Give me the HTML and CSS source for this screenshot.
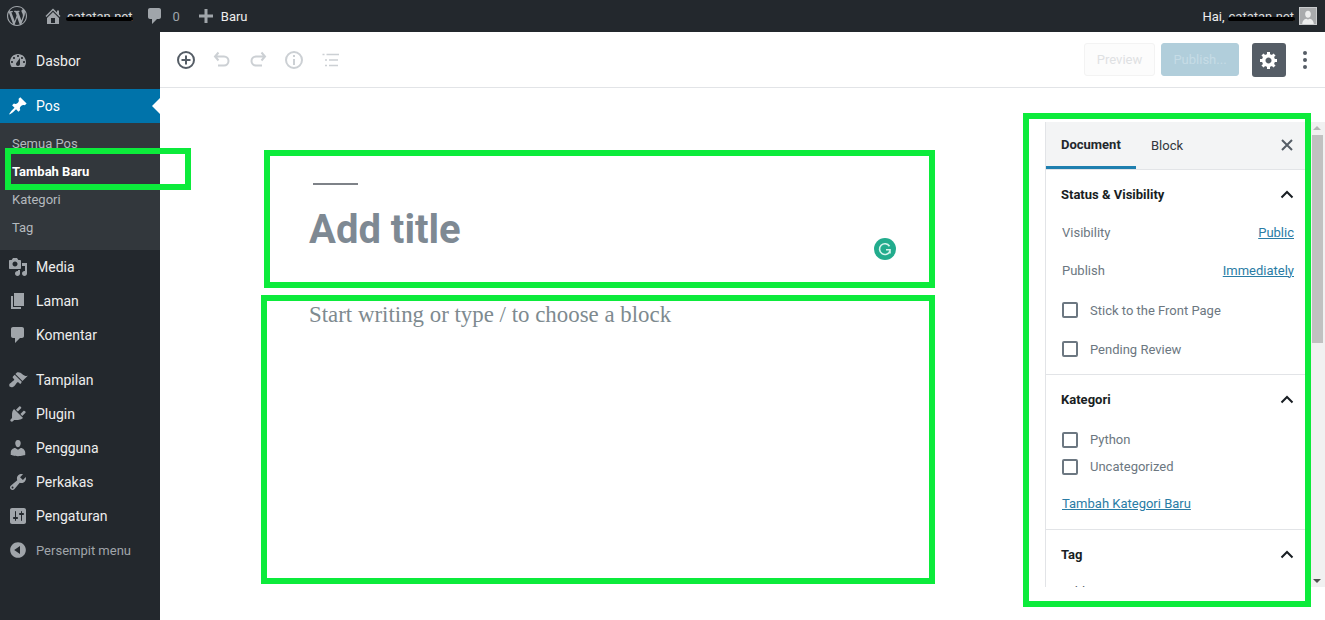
FILE: index.html
```html
<!DOCTYPE html>
<html lang="id">
<head>
<meta charset="utf-8">
<title>Add New Post</title>
<link rel="stylesheet" href="styles.css">
</head>
<body>
<div class="app">
  <header class="adminbar">
    <div class="bar-left">
      <svg class="bar-icon wp" viewBox="0 0 20 20"><path d="M20 10c0-5.51-4.49-10-10-10C4.48 0 0 4.49 0 10c0 5.52 4.48 10 10 10 5.51 0 10-4.48 10-10zM7.78 15.37L4.37 6.22c.55-.02 1.17-.08 1.17-.08.5-.06.44-1.13-.06-1.11 0 0-1.45.11-2.37.11-.18 0-.37 0-.58-.01C4.12 2.69 6.87 1.11 10 1.11c2.33 0 4.45.87 6.05 2.34-.68-.11-1.65.39-1.65 1.58 0 .74.45 1.36.9 2.1.35.61.55 1.36.55 2.46 0 1.49-1.4 5-1.4 5l-3.03-8.37c.54-.02.82-.17.82-.17.5-.05.44-1.25-.06-1.22 0 0-1.44.12-2.38.12-.87 0-2.33-.12-2.33-.12-.5-.03-.56 1.2-.06 1.22l.92.08 1.26 3.41zM17.41 10c.24-.64.74-1.87.43-4.25.7 1.29 1.05 2.71 1.05 4.25 0 3.29-1.73 6.24-4.4 7.78.97-2.59 1.94-5.2 2.92-7.78zM6.1 18.09C3.12 16.65 1.11 13.53 1.11 10c0-1.3.23-2.48.72-3.59C3.25 10.3 4.67 14.2 6.1 18.09zm4.03-6.63l2.58 6.98c-.86.29-1.76.45-2.71.45-.79 0-1.57-.11-2.29-.33.81-2.38 1.62-4.74 2.42-7.1z"/></svg>
      <svg class="bar-icon home" viewBox="0 0 20 20"><path d="M16 8.5l1.53 1.53-1.06 1.06L10 4.62l-6.47 6.47-1.06-1.06L10 2.5l4 4v-2h2v4zm-6-2.46l6 5.99V18H4v-5.97zM12 17v-5H8v5h4z"/></svg>
      <span class="scribbled site">catatan.net</span>
      <svg class="bar-icon comment" viewBox="0 0 20 20"><path d="M5 2h9c1.1 0 2 .9 2 2v7c0 1.1-.9 2-2 2h-2l-5 5v-5H5c-1.1 0-2-.9-2-2V4c0-1.1.9-2 2-2z"/></svg>
      <span class="count">0</span>
      <svg class="bar-icon plus" viewBox="0 0 20 20"><path d="M17 8.5v3h-5.5V17h-3v-5.5H3v-3h5.5V3h3v5.5z"/></svg>
      <span class="bar-text">Baru</span>
    </div>
    <div class="bar-right">
      <span class="bar-text">Hai,</span>
      <span class="scribbled user">catatan.net</span>
      <span class="avatar"><svg viewBox="0 0 18 18"><path d="M9 3c2 0 3.200 1.500 3.200 3.700S11 11 9 11 5.800 8.900 5.800 6.700 7 3 9 3zM2.500 18c0-3.500 2-5.500 4.500-6l2 1 2-1c2.500.5 4.500 2.500 4.500 6z"/></svg></span>
    </div>
  </header>

  <div class="main">
    <nav class="sidemenu">
      <a class="item first"><svg viewBox="0 0 20 20"><path fill-rule="evenodd" d="M3.760 16h12.480c1.100-1.370 1.760-3.110 1.760-5 0-4.420-3.580-8-8-8s-8 3.580-8 8c0 1.890.66 3.630 1.760 5zM10 4c.55 0 1 .45 1 1s-.45 1-1 1-1-.45-1-1 .45-1 1-1zM6 6c.55 0 1 .45 1 1s-.45 1-1 1-1-.45-1-1 .45-1 1-1zm8 0c.55 0 1 .45 1 1s-.45 1-1 1-1-.45-1-1 .45-1 1-1zm-5.370 5.550L12 7v6c0 1.100-.9 2-2 2s-2-.9-2-2c0-.57.24-1.080.63-1.450zM4 10c.55 0 1 .45 1 1s-.45 1-1 1-1-.45-1-1 .45-1 1-1zm12 0c.55 0 1 .45 1 1s-.45 1-1 1-1-.45-1-1 .45-1 1-1z"/></svg>Dasbor</a>
      <a class="item active"><svg viewBox="0 0 20 20"><path d="M10.440 3.020l1.820-1.820 6.360 6.350-1.830 1.820c-1.050-.68-2.480-.57-3.410.36l-.75.75c-.92.93-1.040 2.350-.35 3.410l-1.830 1.820-2.410-2.410-2.800 2.790c-.42.42-3.380 2.710-3.800 2.290s1.860-3.390 2.280-3.810l2.790-2.790L4.100 9.360l1.830-1.820c1.050.69 2.480.57 3.400-.36l.75-.75c.93-.92 1.050-2.350.36-3.410z"/></svg>Pos</a>
      <ul class="submenu">
        <li>Semua Pos</li>
        <li class="current">Tambah Baru</li>
        <li>Kategori</li>
        <li>Tag</li>
      </ul>
      <a class="item"><svg viewBox="0 0 20 20"><path fill-rule="evenodd" d="M13 11V4c0-.55-.45-1-1-1h-1.670L9 1H5L3.670 3H2c-.55 0-1 .45-1 1v7c0 .55.45 1 1 1h10c.55 0 1-.45 1-1zM7 4.500c1.380 0 2.500 1.120 2.500 2.500S8.380 9.500 7 9.500 4.500 8.380 4.500 7 5.620 4.500 7 4.500zM14 6h5v10.500c0 1.380-1.120 2.500-2.500 2.500S14 17.880 14 16.500s1.120-2.500 2.500-2.500c.17 0 .34.02.5.05V9h-3V6zm-4 8.050V13h2v3.500c0 1.380-1.120 2.500-2.500 2.500S7 17.880 7 16.500 8.120 14 9.500 14c.17 0 .34.02.5.05z"/></svg>Media</a>
      <a class="item"><svg viewBox="0 0 20 20"><path d="M6 15V2h10v13H6zm-1 1h8v2H3V5h2v11z"/></svg>Laman</a>
      <a class="item"><svg viewBox="0 0 20 20"><path d="M5 2h9c1.100 0 2 .9 2 2v7c0 1.100-.9 2-2 2h-2l-5 5v-5H5c-1.100 0-2-.9-2-2V4c0-1.100.9-2 2-2z"/></svg>Komentar</a>
      <a class="item spaced"><svg viewBox="0 0 20 20"><path d="M14.480 11.060L7.410 3.990l1.500-1.500c.5-.56 2.300-.47 3.510.32 1.210.8 1.430 1.280 2.910 2.100 1.180.64 2.450 1.260 4.450.85zm-.71.71L6.700 4.700 4.930 6.470c-.39.39-.39 1.020 0 1.410l1.060 1.060c.39.39.39 1.030 0 1.420-.6.6-1.430 1.110-2.210 1.690-.35.26-.7.53-1.010.84C1.430 13.230.76 14.520 1.600 16.400c.08.18.28.38.46.46 1.880.84 3.170.17 4.530-1.170.3-.31.58-.66.84-1.010.58-.78 1.090-1.610 1.690-2.210.39-.39 1.030-.39 1.420 0l1.060 1.060c.39.39 1.020.39 1.410 0z"/></svg>Tampilan</a>
      <a class="item"><svg viewBox="0 0 20 20"><path d="M13.110 4.360L9.870 7.600 8 5.730l3.240-3.240c.35-.34 1.050-.2 1.560.32.52.51.66 1.210.31 1.550zm-8 1.770l.91-1.120 9.010 9.010-1.190.84c-.71.71-2.630 1.160-3.820 1.160H6.140L4.900 17.260c-.59.59-1.540.59-2.120 0-.59-.58-.59-1.530 0-2.120l1.240-1.240v-3.880c0-1.130.4-3.190 1.090-3.890zm7.260 3.970l3.240-3.240c.34-.35 1.040-.21 1.550.31.52.51.66 1.210.31 1.550l-3.240 3.250z"/></svg>Plugin</a>
      <a class="item"><svg viewBox="0 0 20 20"><path d="M10 9.250c-2.270 0-2.730-3.440-2.730-3.440C7 4.020 7.820 2 9.970 2c2.160 0 2.980 2.020 2.710 3.810 0 0-.41 3.440-2.680 3.440zm0 2.570L12.720 10c2.390 0 4.520 2.330 4.520 4.530v2.490s-3.650 1.130-7.240 1.130c-3.650 0-7.240-1.130-7.240-1.130v-2.490c0-2.250 1.940-4.480 4.470-4.480z"/></svg>Pengguna</a>
      <a class="item"><svg viewBox="0 0 20 20"><path fill-rule="evenodd" d="M16.680 9.770c-1.340 1.340-3.300 1.670-4.950.99l-5.410 6.520c-.99.99-2.590.99-3.580 0s-.99-2.590 0-3.570l6.520-5.420c-.68-1.650-.35-3.610.99-4.950 1.280-1.280 3.120-1.620 4.720-1.060l-2.890 2.890 2.820 2.820 2.860-2.870c.53 1.580.18 3.390-1.080 4.650zM3.810 16.210c.4.39 1.040.39 1.430 0 .4-.4.4-1.040 0-1.430-.39-.4-1.030-.4-1.430 0-.39.39-.39 1.030 0 1.430z"/></svg>Perkakas</a>
      <a class="item"><svg viewBox="0 0 20 20"><path fill-rule="evenodd" d="M18 16V4c0-1.100-.9-2-2-2H4c-1.100 0-2 .9-2 2v12c0 1.100.9 2 2 2h12c1.100 0 2-.9 2-2zM8 11h1c.55 0 1 .45 1 1s-.45 1-1 1H8v1.500c0 .28-.22.5-.5.5s-.5-.22-.5-.5V13H6c-.55 0-1-.45-1-1s.45-1 1-1h1V5.500c0-.28.22-.5.5-.5s.5.22.5.5V11zm5-2h-1c-.55 0-1-.45-1-1s.45-1 1-1h1V5.500c0-.28.22-.5.5-.5s.5.22.5.5V7h1c.55 0 1 .45 1 1s-.45 1-1 1h-1v5.500c0 .28-.22.5-.5.5s-.5-.22-.5-.5V9z"/></svg>Pengaturan</a>
      <a class="item collapse"><svg viewBox="0 0 20 20"><path fill-rule="evenodd" d="M10 2.160c4.330 0 7.840 3.510 7.840 7.840s-3.510 7.840-7.840 7.840S2.160 14.330 2.160 10 5.710 2.160 10 2.160zm2 11.720V6.120L6.180 9.970z"/></svg>Persempit menu</a>
    </nav>

    <div class="editor">
      <div class="toolbar">
        <div class="tools">
          <svg class="tool on" viewBox="0 0 24 24"><circle cx="12" cy="12" r="8" /><path d="M12 7.500v9M7.500 12h9"/></svg>
          <svg class="tool" viewBox="0 0 24 24"><path d="M8.500 4.500L5 8.500l3.500 4M5.500 8.500H14a4.500 4.500 0 0 1 0 9H8"/></svg>
          <svg class="tool" viewBox="0 0 24 24"><path d="M15.500 4.500l3.500 4-3.500 4M18.500 8.500H10a4.500 4.500 0 0 0 0 9h6"/></svg>
          <svg class="tool" viewBox="0 0 24 24"><circle cx="12" cy="12" r="8"/><path d="M12 11v6M12 7v2"/></svg>
          <svg class="tool thin" viewBox="0 0 24 24"><path d="M8.500 6.500H21M11 12h9M11 17.500h9M4.500 6.500h2M7 12h2M7 17.500h2"/></svg>
        </div>
        <div class="actions">
          <button class="btn preview">Preview</button>
          <button class="btn publish">Publish...</button>
          <button class="gear"><svg viewBox="0 0 20 20"><path fill-rule="evenodd" d="M18 12h-2.180c-.17.7-.44 1.350-.81 1.930l1.540 1.540-2.100 2.100-1.540-1.540c-.58.36-1.230.63-1.910.79V19H8v-2.180c-.68-.16-1.330-.43-1.910-.79l-1.540 1.540-2.120-2.120 1.540-1.540c-.36-.58-.63-1.230-.79-1.910H1V9.030h2.170c.16-.7.44-1.350.8-1.940L2.430 5.550l2.100-2.100 1.540 1.540c.58-.37 1.240-.64 1.930-.81V2h3v2.180c.68.16 1.330.43 1.910.79l1.540-1.540 2.120 2.120-1.540 1.540c.36.59.64 1.240.8 1.940H18V12zm-8.500 1.500c1.660 0 3-1.340 3-3s-1.340-3-3-3-3 1.340-3 3 1.340 3 3 3z"/></svg></button>
          <div class="dots"><i></i><i></i><i></i></div>
        </div>
      </div>

      <div class="workspace">
        <div class="canvas">
          <div class="title-rule"></div>
          <h1 class="post-title">Add title</h1>
          <p class="post-body">Start writing or type / to choose a block</p>
        </div>

        <aside class="panel">
          <div class="tabs">
            <span class="tab selected">Document</span>
            <span class="tab">Block</span>
            <svg class="close" viewBox="0 0 20 20"><path d="M5 5l10 10M15 5L5 15"/></svg>
          </div>
          <section class="sect status">
            <div class="sect-head">Status &amp; Visibility<svg class="chev" viewBox="0 0 14 9"><path d="M1.500 7.500L7 2l5.500 5.500"/></svg></div>
            <div class="row"><span>Visibility</span><a class="link">Public</a></div>
            <div class="row gap-row"><span>Publish</span><a class="link">Immediately</a></div>
            <label class="check stick"><i class="box"></i>Stick to the Front Page</label>
            <label class="check pending"><i class="box"></i>Pending Review</label>
          </section>
          <section class="sect kategori">
            <div class="sect-head">Kategori<svg class="chev" viewBox="0 0 14 9"><path d="M1.500 7.500L7 2l5.500 5.500"/></svg></div>
            <label class="check tight"><i class="box"></i>Python</label>
            <label class="check tight"><i class="box"></i>Uncategorized</label>
            <a class="link add-cat">Tambah Kategori Baru</a>
          </section>
          <section class="sect last">
            <div class="sect-head">Tag<svg class="chev" viewBox="0 0 14 9"><path d="M1.500 7.500L7 2l5.500 5.500"/></svg></div>
            <div class="tag-label">Add New Tag</div>
          </section>
        </aside>

        <div class="scrollbar">
          <span class="arrow up"></span>
          <span class="thumb"></span>
          <span class="arrow down"></span>
        </div>
      </div>
    </div>
  </div>
</div>

<div class="mark mark-menu"></div>
<div class="mark mark-title"></div>
<div class="mark mark-body"></div>
<div class="mark mark-panel"></div>
<div class="grammarly"><svg viewBox="0 0 22 22"><path d="M15.500 8.200A5.400 5.400 0 1 0 16 13M16 15.500V11.800h-4"/></svg></div>
</body>
</html>
```

FILE: styles.css
```css
* { box-sizing: border-box; }
html, body { margin: 0; padding: 0; height: 100%; overflow: hidden; background: #fff; }
body { font-family: Roboto, "Liberation Sans", sans-serif; font-size: 13px; color: #555d66; }

.app { display: flex; flex-direction: column; height: 620px; }

/* admin bar */
.adminbar { height: 32px; flex: none; background: #23282d; display: flex; justify-content: space-between; align-items: center; color: #eee; padding: 0 8px 0 7px; }
.bar-left, .bar-right { display: flex; align-items: center; }
.bar-icon { fill: #a0a5aa; flex: none; }
.bar-icon.wp { width: 20px; height: 20px; margin-right: 16px; }
.bar-icon.home { width: 20px; height: 20px; margin-left: 0; margin-right: 4px; }
.bar-icon.comment { width: 20px; height: 20px; margin-left: 13px; margin-right: 7px; }
.bar-icon.plus { width: 20px; height: 20px; margin-left: 16px; margin-right: 5px; }
.bar-text { color: #eee; font-size: 13px; }
.count { color: #a0a5aa; font-size: 13px; }
.scribbled { position: relative; color: #ddd; font-size: 13px; }
.scribbled::after { content: ""; position: absolute; left: -1px; right: -1px; top: 8px; height: 4px; background: #000; border-radius: 2px; }
.site { margin-left: 0; }
.user { margin-left: 4px; margin-right: 5px; }
.avatar { width: 18px; height: 18px; background: #a9abad; border: 1px solid #c9cbcd; display: block; margin-right: 0; }
.avatar svg { width: 16px; height: 16px; display: block; fill: #eceded; }

/* main */
.main { flex: 1; display: flex; min-height: 0; }

/* side menu */
.sidemenu { width: 160px; flex: none; background: #23282d; padding-top: 12px; display: flex; flex-direction: column; }
.item { position: relative; height: 34px; display: flex; align-items: center; padding-left: 8px; gap: 8px; color: #eee; font-size: 14px; }
.item svg { width: 20px; height: 20px; fill: #a0a5aa; flex: none; }
.item.first { margin-bottom: 11px; }
.item.spaced { margin-top: 11px; }
.item.active { background: #0073aa; color: #fff; }
.item.active svg { fill: #fff; }
.item.active::after { content: ""; position: absolute; right: 0; top: 9px; border: 8px solid transparent; border-right-color: #fff; border-left-width: 0; }
.item.collapse { font-size: 13px; color: #a0a5aa; }
.submenu { list-style: none; margin: 0; padding: 7px 0 8px; background: #32373c; }
.submenu li { height: 28px; line-height: 28px; padding-left: 12px; font-size: 13px; color: #b4b9be; }
.submenu li.current { color: #fff; font-weight: 700; }

/* editor */
.editor { flex: 1; min-width: 0; display: flex; flex-direction: column; }
.toolbar { height: 56px; flex: none; border-bottom: 1px solid #e2e4e7; display: flex; justify-content: space-between; align-items: center; padding: 0 13px 0 14px; background: #fff; }
.tools { display: flex; gap: 12px; }
.tool { width: 24px; height: 24px; fill: none; stroke: #ccd0d4; stroke-width: 2; }
.tool.on { stroke: #555d66; }
.tool.thin { stroke-width: 1.500; }
.actions { display: flex; align-items: center; }
.btn { height: 33px; font: 13px Roboto, sans-serif; border-radius: 3px; padding: 0; }
.preview { width: 71px; background: #fcfcfc; border: 1px solid #f3f3f3; color: #dfe1e3; margin-right: 6px; }
.publish { width: 78px; background: #b1cedb; border: 1px solid #b1cedb; color: #c6dce6; margin-right: 13px; }
.gear { width: 34px; height: 34px; background: #555d66; border: 0; border-radius: 3px; padding: 7px; margin-right: 12px; display: block; }
.gear svg { width: 20px; height: 20px; fill: #fff; display: block; }
.dots { width: 14px; display: flex; flex-direction: column; align-items: center; gap: 3px; }
.dots i { width: 4px; height: 4px; background: #555d66; border-radius: 50%; display: block; }

.workspace { flex: 1; display: flex; min-height: 0; }
.canvas { flex: 1; min-width: 0; padding: 95px 0 0 149px; }
.title-rule { width: 45px; height: 2px; margin-left: 4px; background: #7e8288; }
.post-title { margin: 21px 0 0; font: 700 40px/48px Roboto, sans-serif; color: #7e8993; }
.post-body { margin: 46px 0 0; font: 22.880px/30px "Liberation Serif", serif; color: #7e8a8f; }

/* panel */
.panel { width: 260px; flex: none; margin-top: 34px; height: 465px; border-left: 1px solid #e2e4e7; overflow: hidden; background: #fff; }
.tabs { height: 48px; background: #f3f4f5; border-bottom: 1px solid #e2e4e7; display: flex; align-items: stretch; position: relative; }
.tab { display: flex; align-items: center; padding: 0 15px; color: #32373c; font-size: 13px; height: 47px; }
.tab.selected { width: 90px; font-weight: 700; border-bottom: 3px solid #1e7faf; color: #23282d; }
.close { position: absolute; right: 8px; top: 13px; width: 20px; height: 20px; stroke: #555d66; stroke-width: 2; fill: none; }
.sect { border-bottom: 1px solid #e2e4e7; padding: 0 11px 0 16px; }
.sect.last { border-bottom: 0; }
.sect-head { height: 48px; display: flex; justify-content: space-between; align-items: center; font-weight: 700; font-size: 13px; color: #191e23; margin-left: -1px; }
.chev { width: 14px; height: 9px; fill: none; stroke: #191e23; stroke-width: 2; flex: none; }
.row { height: 28px; display: flex; justify-content: space-between; align-items: center; color: #6c7781; }
.status .sect-head + .row { margin-top: 0; }
.gap-row { margin-top: 10px; }
.link { color: #2a7ca5; text-decoration: underline; }
.check { display: flex; align-items: center; height: 28px; color: #6c7781; }
.box { width: 16px; height: 16px; border: 2px solid #6c7781; border-radius: 2px; margin-right: 12px; flex: none; }
.stick { margin-top: 12px; }
.pending { margin-top: 11px; margin-bottom: 11px; }
.kategori .sect-head { margin-bottom: 3px; }
.check.tight { height: 27px; }
.add-cat { display: block; margin: 10px 0 11px; line-height: 28px; }
.tag-label { margin-top: 6px; color: #555d66; line-height: 16px; }

/* scrollbar */
.scrollbar { position: relative; width: 15px; height: 465px; margin: 34px 0 0 5px; flex: none; background: #f1f1f1; }
.thumb { position: absolute; left: 2px; top: 13px; width: 11px; height: 208px; background: #c1c1c1; }
.arrow { position: absolute; left: 3px; border: 4px solid transparent; border-top-width: 0; border-bottom-color: #b5b5b5; }
.arrow.up { top: 4px; }
.arrow.down { bottom: 4px; border-bottom-width: 0; border-top-width: 4px; border-top-color: #505050; border-bottom-color: transparent; }

/* green annotation frames */
.mark { position: absolute; border: 6px solid #0ceb3b; pointer-events: none; }
.mark-menu { left: 5px; top: 148px; width: 186px; height: 42px; }
.mark-title { left: 264px; top: 150px; width: 671px; height: 138px; }
.mark-body { left: 261px; top: 295px; width: 674px; height: 289px; }
.mark-panel { left: 1023px; top: 113px; width: 288px; height: 494px; }

.grammarly { position: absolute; left: 874px; top: 238px; width: 22px; height: 22px; border-radius: 50%; background: #22ac8d; }
.grammarly svg { width: 22px; height: 22px; display: block; fill: none; stroke: #d6f3ec; stroke-width: 1.600; }
```
